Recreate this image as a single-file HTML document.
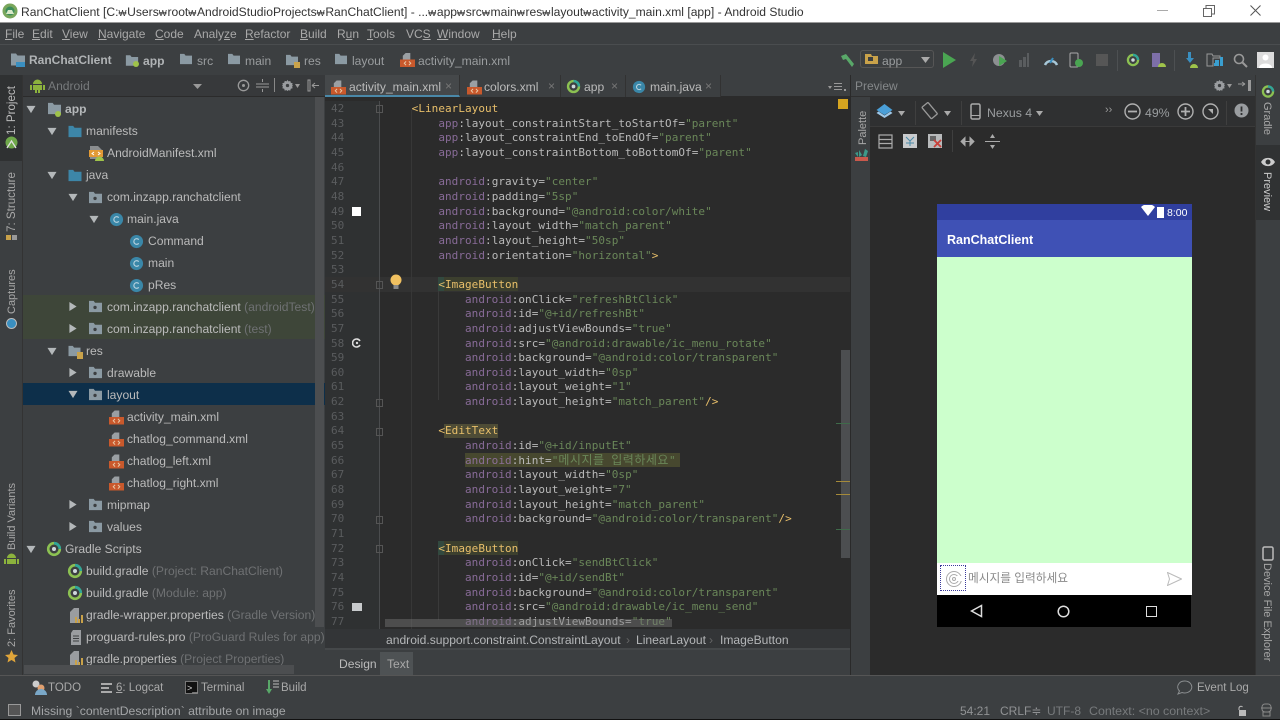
<!DOCTYPE html>
<html><head><meta charset="utf-8"><style>
html,body{margin:0;padding:0;width:1280px;height:720px;overflow:hidden;background:#3c3f41}
body{position:relative;font-family:"Liberation Sans","Noto Sans CJK KR",sans-serif;font-size:12.1px;color:#bbb}
.a{position:absolute}
.t{position:absolute;white-space:nowrap;line-height:16px}
.g{color:#6f7173}
.i{position:absolute}
.v{position:absolute;white-space:nowrap;transform-origin:0 0;line-height:14px;font-size:11px;color:#a8a8a8}
.m{position:absolute;white-space:nowrap;top:26px;line-height:16px;font-size:12px;color:#a9a9a9}
.m u{text-decoration:underline}
.w{display:inline-block;width:8.700px;font-size:8.500px;text-align:left}
pre{margin:0;font-family:"DejaVu Sans Mono","Liberation Mono",monospace;font-size:11px;line-height:14.66px;position:absolute;letter-spacing:.045px}
.n{color:#9876aa;opacity:.85}.b{color:#bababa}.s{color:#6a8759}.y{color:#e8bf6a}.e{color:#bababa}
.k{font-family:'Noto Sans CJK KR',sans-serif;font-size:12px;line-height:0;letter-spacing:.5px}
.tab{position:absolute;top:75px;height:22px;background:#3c3f41;border-right:1px solid #323232}
.sep{position:absolute;width:1px;background:#555}
</style></head><body>
<svg width="0" height="0" style="position:absolute"><defs>
<symbol id="fold" viewBox="0 0 16 14"><path d="M1 1h5l1.500 2H15v10H1z" fill="currentColor"/></symbol>
<symbol id="pkg" viewBox="0 0 16 14"><path d="M1 1h5l1.500 2H15v10H1z" fill="#8b9aa3"/><circle cx="7.500" cy="8" r="1.800" fill="#3c3f41"/></symbol>
<symbol id="gr" viewBox="0 0 16 16"><circle cx="8" cy="8" r="5.800" fill="none" stroke="#8cc152" stroke-width="2.600"/><path d="M8 2.200A5.800 5.800 0 0 1 13.800 8" fill="none" stroke="#2fa59a" stroke-width="2.600"/><circle cx="8" cy="8" r="2" fill="#cfd8dc"/></symbol>
<symbol id="c" viewBox="0 0 16 16"><circle cx="8" cy="8" r="7" fill="#3a87a8"/><path d="M10.400 6a3 3 0 1 0 0 4" fill="none" stroke="#b9d3df" stroke-width="1.200"/></symbol>
<symbol id="xml" viewBox="0 0 16 16"><path d="M6 1h5v7H3V4z" fill="#9a9fa3"/><rect y="8" width="16" height="8" fill="#c9592c"/><path d="M6.500 10l-2 2 2 2M9.500 10l2 2-2 2" fill="none" stroke="#e9c9a8" stroke-width="1"/></symbol>
<symbol id="dn" viewBox="0 0 10 10"><path d="M0 1h10L5 9z" fill="#b4b8ba"/></symbol>
<symbol id="rt" viewBox="0 0 10 10"><path d="M1 0v10l8-5z" fill="#b4b8ba"/></symbol>
<symbol id="gear" viewBox="0 0 14 14"><path d="M7 1l1 1.600 2-.5.500 2 2 .5-.5 2L13 7l-1 1 .5 2-2 .5-.5 2-2-.5L7 13l-1-1-2 .5-.5-2-2-.5.500-2L1 7l1-.500-.5-2 2-.5.500-2 2 .5z" fill="#9a9da0"/><circle cx="7" cy="7" r="1.800" fill="#3c3f41"/></symbol>
</defs></svg>

<!-- title bar -->
<div class="a" style="left:0;top:0;width:1280px;height:23px;background:#fff;border-bottom:1px solid #9a9a9a;box-sizing:border-box"></div>
<svg class="i" style="left:2px;top:3px" width="16" height="16" viewBox="0 0 16 16"><circle cx="8" cy="8" r="7.500" fill="#7aa75c"/><circle cx="8" cy="8" r="4.500" fill="#3b8c5a"/><path d="M4 11h8l-2-4H6z" fill="#d9e8c8"/></svg>
<div class="t" style="left:21px;top:4px;color:#333;font-size:12.1px">RanChatClient [C:<span class="w">₩</span>Users<span class="w">₩</span>root<span class="w">₩</span>AndroidStudioProjects<span class="w">₩</span>RanChatClient] - ...<span class="w">₩</span>app<span class="w">₩</span>src<span class="w">₩</span>main<span class="w">₩</span>res<span class="w">₩</span>layout<span class="w">₩</span>activity_main.xml [app] - Android Studio</div>
<div class="a" style="left:1157px;top:10px;width:11px;height:1px;background:#aaa"></div>
<svg class="i" style="left:1203px;top:5px" width="12" height="12"><path d="M.5 3.500h8v8h-8zM3 3V.5h8.500V9H9" fill="none" stroke="#666"/></svg>
<svg class="i" style="left:1250px;top:5px" width="12" height="12"><path d="M.5.5l10 10M10.500.5l-10 10" fill="none" stroke="#555"/></svg>

<!-- menu -->
<div class="a" style="left:0;top:23px;width:1280px;height:22px;background:#3c3f41;border-bottom:1px solid #4a4d4f;box-sizing:border-box"></div>
<span class="m" style="left:5px"><u>F</u>ile</span><span class="m" style="left:32px"><u>E</u>dit</span><span class="m" style="left:62px"><u>V</u>iew</span><span class="m" style="left:98px"><u>N</u>avigate</span><span class="m" style="left:155px"><u>C</u>ode</span><span class="m" style="left:194px">Analy<u>z</u>e</span><span class="m" style="left:245px"><u>R</u>efactor</span><span class="m" style="left:300px"><u>B</u>uild</span><span class="m" style="left:337px">R<u>u</u>n</span><span class="m" style="left:367px"><u>T</u>ools</span><span class="m" style="left:406px">VC<u>S</u></span><span class="m" style="left:437px"><u>W</u>indow</span><span class="m" style="left:492px"><u>H</u>elp</span>

<!-- nav bar -->
<svg class="i" style="left:10px;top:52px;color:#8b9aa3" width="16" height="15"><use href="#fold"/></svg><div class="a" style="left:16px;top:62px;width:9px;height:5px;background:#3a8fc0"></div>
<span class="t" style="left:29px;top:52px;font-weight:bold;color:#b0b3b5;font-size:12px">RanChatClient</span>
<svg class="i" style="left:125px;top:54px;color:#8b9aa3" width="14" height="13"><use href="#fold"/></svg><div class="a" style="left:133px;top:61px;width:6px;height:6px;border-radius:3px;background:#9fc34a"></div>
<span class="t" style="left:143px;top:53px;font-weight:bold;color:#b0b3b5">app</span>
<svg class="i" style="left:179px;top:53px;color:#8b9aa3" width="14" height="12"><use href="#fold"/></svg><span class="t" style="left:197px;top:53px;color:#9a9d9f">src</span>
<svg class="i" style="left:227px;top:53px;color:#8b9aa3" width="14" height="12"><use href="#fold"/></svg><span class="t" style="left:245px;top:53px;color:#9a9d9f">main</span>
<svg class="i" style="left:285px;top:54px;color:#8b9aa3" width="14" height="12"><use href="#fold"/></svg><div class="a" style="left:294px;top:62px;width:6px;height:6px;background:#c9a24a"></div><span class="t" style="left:304px;top:53px;color:#9a9d9f">res</span>
<svg class="i" style="left:334px;top:53px;color:#8b9aa3" width="14" height="12"><use href="#fold"/></svg><span class="t" style="left:352px;top:53px;color:#9a9d9f">layout</span>
<svg class="i" style="left:400px;top:52px" width="15" height="15"><use href="#xml"/></svg><span class="t" style="left:418px;top:53px;color:#9a9d9f">activity_main.xml</span>
<svg class="i" style="left:840px;top:53px" width="16" height="15"><path d="M1 3l5-2 8 10-2 3L6 6 3 7z" fill="#59a869"/></svg>
<div class="a" style="left:860px;top:50px;width:74px;height:18px;border:1px solid #565656;border-radius:3px;box-sizing:border-box"></div>
<svg class="i" style="left:864px;top:53px" width="15" height="12"><path d="M1 1h6l1 2h6v8H1z" fill="#c9a24a"/><rect x="4" y="4" width="5" height="4" fill="#3c3f41"/></svg>
<span class="t" style="left:882px;top:53px;color:#9a9d9f">app</span>
<svg class="i" style="left:921px;top:57px" width="9" height="6"><path d="M0 0h9L4.500 6z" fill="#aaa"/></svg>
<svg class="i" style="left:943px;top:52px" width="14" height="16"><path d="M0 0l13 8-13 8z" fill="#4aa552"/></svg>
<svg class="i" style="left:969px;top:53px" width="10" height="14"><path d="M6 0L1 8h3l-1 6 5-8H5z" fill="#555"/></svg>
<svg class="i" style="left:992px;top:52px" width="16" height="16"><circle cx="7" cy="8" r="6" fill="#8c8f91"/><path d="M7 4l8 5-8 5z" fill="#4aa552"/></svg>
<svg class="i" style="left:1018px;top:52px" width="16" height="16"><path d="M1 8h3v7H1zM5 5h3v10H5zM9 1h2v14H9z" fill="#5a5d5f"/></svg>
<svg class="i" style="left:1043px;top:53px" width="16" height="13"><path d="M2 12a6.500 6.500 0 0 1 12 0" fill="none" stroke="#a8c8d8" stroke-width="2.500"/><path d="M7 10l3-5" stroke="#3a8fc0" stroke-width="2"/></svg>
<svg class="i" style="left:1069px;top:52px" width="15" height="16"><rect x="1" y="1" width="8" height="14" rx="1" fill="none" stroke="#aaa"/><circle cx="10" cy="11" r="4" fill="#4aa552"/></svg>
<div class="a" style="left:1096px;top:54px;width:12px;height:12px;background:#565656"></div>
<div class="sep" style="left:1117px;top:50px;height:21px;background:#4d5052"></div>
<svg class="i" style="left:1126px;top:52px" width="14" height="16" viewBox="0 0 16 16"><use href="#gr"/></svg>
<svg class="i" style="left:1151px;top:52px" width="15" height="16"><rect x="1" y="1" width="8" height="14" fill="#7d6fa8"/><path d="M7 15a4 4 0 0 1 8 0z" fill="#9fc34a"/></svg>
<div class="sep" style="left:1174px;top:50px;height:21px;background:#4d5052"></div>
<svg class="i" style="left:1183px;top:52px" width="16" height="16"><path d="M5 0h3v6h3l-4 5-4-5h2z" fill="#3a8fc0"/><path d="M7 16a4 4 0 0 1 8 0z" fill="#9fc34a"/></svg>
<svg class="i" style="left:1206px;top:53px" width="18" height="14"><path d="M1 1h5l1 2h7v2H7v8H1z" fill="none" stroke="#999"/><path d="M9 7h4v3H9zM14 4h3v9h-3zM8 10h5v3H8z" fill="#3a9fd0"/></svg>
<svg class="i" style="left:1233px;top:53px" width="15" height="15"><circle cx="6" cy="6" r="4.500" fill="none" stroke="#999" stroke-width="1.600"/><path d="M9.500 9.500l4.500 4.500" stroke="#999" stroke-width="2"/></svg>
<div class="a" style="left:1257px;top:52px;width:17px;height:16px;background:#dcdcdc"></div>
<svg class="i" style="left:1257px;top:52px" width="17" height="16"><circle cx="8.500" cy="5.500" r="3" fill="#fff"/><path d="M2 16c0-6 13-6 13 0z" fill="#fff"/></svg>

<!-- left strip -->
<div class="a" style="left:0;top:75px;width:23px;height:600px;background:#3c3f41;border-right:1px solid #333;box-sizing:border-box"></div>
<div class="a" style="left:0;top:75px;width:22px;height:86px;background:#2f3132"></div>
<span class="v" style="left:5px;top:135px;transform:rotate(-90deg);color:#bbb;font-size:11.600px">1: Project</span>
<svg class="i" style="left:4px;top:135px" width="15" height="15"><circle cx="7.500" cy="7.500" r="6" fill="#6fa84a"/><path d="M3 13l4.500-7 4.500 7" fill="none" stroke="#e0e0e0" stroke-width="1.300"/></svg>
<span class="v" style="left:5px;top:232px;transform:rotate(-90deg);font-size:11.600px">7: Structure</span>
<div class="a" style="left:6px;top:235px;width:5px;height:5px;background:#c9a24a"></div><div class="a" style="left:12px;top:235px;width:5px;height:5px;background:#999"></div>
<span class="v" style="left:5px;top:314px;transform:rotate(-90deg)">Captures</span>
<svg class="i" style="left:5px;top:316px" width="13" height="14"><circle cx="6.500" cy="7.500" r="5" fill="#3a8fc0" stroke="#bbb"/></svg>
<span class="v" style="left:5px;top:550px;transform:rotate(-90deg)">Build Variants</span>
<svg class="i" style="left:4px;top:552px" width="15" height="15"><path d="M3 6a4.500 4.500 0 0 1 9 0zM3 7h9v5H3zM0 7h2v5H0zM13 7h2v5h-2z" fill="#8cb33d"/></svg>
<span class="v" style="left:5px;top:647px;transform:rotate(-90deg)">2: Favorites</span>
<svg class="i" style="left:5px;top:650px" width="13" height="13"><path d="M6.500 0l2 4.500 4.500.5-3.500 3 1 4.500-4-2.500-4 2.500 1-4.500L0 5l4.500-.5z" fill="#e0a53a"/></svg>

<!-- project panel -->
<div class="a" style="left:23px;top:75px;width:302px;height:600px;background:#3c3f41;overflow:hidden"></div>
<div class="a" style="left:23px;top:75px;width:302px;height:22px;background:#37393b;border-bottom:1px solid #2b2b2b;box-sizing:border-box"></div>
<svg class="i" style="left:30px;top:78px" width="15" height="15"><path d="M3 6a4.500 4.500 0 0 1 9 0zM3 7h9v5H3zM0 7h2v5H0zM13 7h2v5h-2zM5 12h2v3H5zM8 12h2v3H8z" fill="#8cb33d"/></svg>
<span class="t" style="left:48px;top:78px;color:#777a7c">Android</span>
<svg class="i" style="left:193px;top:84px" width="9" height="5"><path d="M0 0h9L4.500 5z" fill="#999"/></svg>
<svg class="i" style="left:237px;top:79px" width="13" height="13"><circle cx="6.500" cy="6.500" r="5.200" fill="none" stroke="#999" stroke-width="1.300"/><circle cx="6.500" cy="6.500" r="1.500" fill="#999"/></svg>
<svg class="i" style="left:256px;top:79px" width="13" height="13"><path d="M0 5h13M0 8h13M6.500 0v3M6.500 10v3" stroke="#999"/></svg>
<div class="a" style="left:274px;top:78px;width:1px;height:14px;background:#888"></div>
<svg class="i" style="left:281px;top:79px" width="13" height="13" viewBox="0 0 14 14"><use href="#gear"/></svg>
<svg class="i" style="left:295px;top:84px" width="5" height="4"><path d="M0 0h5L2.500 4z" fill="#999"/></svg>
<svg class="i" style="left:307px;top:79px" width="13" height="13"><path d="M1 1h2v11H1zM5 6.500h7M5 6.500l3-2.500M5 6.500l3 2.500" fill="none" stroke="#999"/></svg>
<div class="a" style="left:23px;top:295px;width:302px;height:44px;background:#3e4639"></div>
<div class="a" style="left:23px;top:383px;width:302px;height:22px;background:#0d2f4a"></div>
<div class="a" style="left:315px;top:97px;width:9px;height:530px;background:#4c4e50"></div>

<div class="a" style="left:0;top:1px;width:325px;height:674px;overflow:visible">
<svg class="i" style="left:26px;top:104px" width="10" height="9"><use href="#dn"/></svg>
<svg class="i" style="left:47px;top:101px;color:#8b9aa3" width="15" height="13"><use href="#fold"/></svg><div class="a" style="left:55px;top:110px;width:6px;height:6px;border-radius:3px;background:#9fc34a"></div>
<span class="t" style="left:65px;top:100px;font-weight:bold;color:#b4b7b9">app</span>
<svg class="i" style="left:47px;top:126px" width="10" height="9"><use href="#dn"/></svg>
<svg class="i" style="left:67px;top:124px;color:#3d86a8" width="16" height="13"><use href="#fold"/></svg>
<span class="t" style="left:86px;top:122px">manifests</span>
<svg class="i" style="left:89px;top:144px" width="15" height="16"><path d="M1 1h8l4 4v9H1z" fill="#8a8d8f"/><rect y="5" width="14" height="7" fill="#e29a35"/><path d="M5 7l-2 1.500 2 1.500M9 7l2 1.500-2 1.500" fill="none" stroke="#fff"/><path d="M6 16a4 4 0 0 1 9 0z" fill="#9fc34a"/></svg>
<span class="t" style="left:107px;top:144px">AndroidManifest.xml</span>
<svg class="i" style="left:47px;top:170px" width="10" height="9"><use href="#dn"/></svg>
<svg class="i" style="left:67px;top:168px;color:#3d86a8" width="16" height="13"><use href="#fold"/></svg>
<span class="t" style="left:86px;top:166px">java</span>
<svg class="i" style="left:68px;top:192px" width="10" height="9"><use href="#dn"/></svg>
<svg class="i" style="left:88px;top:190px" width="15" height="13"><use href="#pkg"/></svg>
<span class="t" style="left:107px;top:188px">com.inzapp.ranchatclient</span>
<svg class="i" style="left:89px;top:214px" width="10" height="9"><use href="#dn"/></svg>
<svg class="i" style="left:109px;top:211px" width="15" height="15"><use href="#c"/></svg>
<span class="t" style="left:127px;top:210px">main.java</span>
<svg class="i" style="left:129px;top:233px" width="15" height="15"><use href="#c"/></svg><span class="t" style="left:148px;top:232px">Command</span>
<svg class="i" style="left:129px;top:255px" width="15" height="15"><use href="#c"/></svg><span class="t" style="left:148px;top:254px">main</span>
<svg class="i" style="left:129px;top:277px" width="15" height="15"><use href="#c"/></svg><span class="t" style="left:148px;top:276px">pRes</span>
<svg class="i" style="left:68px;top:301px" width="10" height="9"><use href="#rt"/></svg>
<svg class="i" style="left:88px;top:299px" width="15" height="13"><use href="#pkg"/></svg>
<span class="t" style="left:107px;top:298px">com.inzapp.ranchatclient <span class="g">(androidTest)</span></span>
<svg class="i" style="left:68px;top:323px" width="10" height="9"><use href="#rt"/></svg>
<svg class="i" style="left:88px;top:321px" width="15" height="13"><use href="#pkg"/></svg>
<span class="t" style="left:107px;top:320px">com.inzapp.ranchatclient <span class="g">(test)</span></span>
<svg class="i" style="left:47px;top:346px" width="10" height="9"><use href="#dn"/></svg>
<svg class="i" style="left:67px;top:344px;color:#8b9aa3" width="15" height="12"><use href="#fold"/></svg><div class="a" style="left:77px;top:351px;width:6px;height:7px;background:#c9a24a"></div>
<span class="t" style="left:86px;top:342px">res</span>
<svg class="i" style="left:68px;top:367px" width="10" height="9"><use href="#rt"/></svg>
<svg class="i" style="left:88px;top:365px" width="15" height="13"><use href="#pkg"/></svg>
<span class="t" style="left:107px;top:364px">drawable</span>
<svg class="i" style="left:68px;top:389px" width="10" height="9"><use href="#dn"/></svg>
<svg class="i" style="left:88px;top:387px" width="15" height="13"><use href="#pkg"/></svg>
<span class="t" style="left:107px;top:386px">layout</span>
<svg class="i" style="left:109px;top:408px" width="15" height="16"><use href="#xml"/></svg><span class="t" style="left:127px;top:408px">activity_main.xml</span>
<svg class="i" style="left:109px;top:430px" width="15" height="16"><use href="#xml"/></svg><span class="t" style="left:127px;top:430px">chatlog_command.xml</span>
<svg class="i" style="left:109px;top:452px" width="15" height="16"><use href="#xml"/></svg><span class="t" style="left:127px;top:452px">chatlog_left.xml</span>
<svg class="i" style="left:109px;top:474px" width="15" height="16"><use href="#xml"/></svg><span class="t" style="left:127px;top:474px">chatlog_right.xml</span>
<svg class="i" style="left:68px;top:499px" width="10" height="9"><use href="#rt"/></svg>
<svg class="i" style="left:88px;top:497px" width="15" height="13"><use href="#pkg"/></svg>
<span class="t" style="left:107px;top:496px">mipmap</span>
<svg class="i" style="left:68px;top:521px" width="10" height="9"><use href="#rt"/></svg>
<svg class="i" style="left:88px;top:519px" width="15" height="13"><use href="#pkg"/></svg>
<span class="t" style="left:107px;top:518px">values</span>
<svg class="i" style="left:26px;top:544px" width="10" height="9"><use href="#dn"/></svg>
<svg class="i" style="left:46px;top:540px" width="16" height="16"><use href="#gr"/></svg>
<span class="t" style="left:65px;top:540px">Gradle Scripts</span>
<svg class="i" style="left:67px;top:562px" width="16" height="16"><use href="#gr"/></svg>
<span class="t" style="left:86px;top:562px">build.gradle <span class="g">(Project: RanChatClient)</span></span>
<svg class="i" style="left:67px;top:584px" width="16" height="16"><use href="#gr"/></svg>
<span class="t" style="left:86px;top:584px">build.gradle <span class="g">(Module: app)</span></span>
<svg class="i" style="left:69px;top:607px" width="15" height="15"><path d="M1 4l4-4h5v15H1z" fill="#9a9da0"/><path d="M6 9h2v6H6zM9 11h2v4H9zM12 7h2v8h-2z" fill="#c9a24a"/></svg>
<span class="t" style="left:86px;top:606px">gradle-wrapper.properties <span class="g">(Gradle Version)</span></span>
<svg class="i" style="left:70px;top:629px" width="12" height="15"><path d="M3 0h8v15H1V3z" fill="#9a9da0"/><path d="M3 6h6M3 8.500h6M3 11h6" stroke="#3c3f41"/></svg>
<span class="t" style="left:86px;top:628px">proguard-rules.pro <span class="g">(ProGuard Rules for app)</span></span>
<svg class="i" style="left:69px;top:650px" width="15" height="15"><path d="M1 4l4-4h5v15H1z" fill="#9a9da0"/><path d="M6 9h2v6H6zM9 11h2v4H9zM12 7h2v8h-2z" fill="#c9a24a"/></svg>
<span class="t" style="left:86px;top:650px">gradle.properties <span class="g">(Project Properties)</span></span>
</div>
<div class="a" style="left:24px;top:665px;width:270px;height:9px;background:#4c4e50"></div>

<!-- editor -->
<div class="a" style="left:325px;top:75px;width:525px;height:600px;background:#2b2b2b;overflow:hidden">
 <div class="a" style="left:0;top:26px;width:55px;height:528px;background:#2f3132"></div>
 <div class="a" style="left:0;top:202px;width:525px;height:15px;background:#323232"></div>
 <div class="a" style="left:54px;top:26px;width:1px;height:528px;background:#4a4c4e"></div>
 <div class="a" style="left:86px;top:35px;width:1px;height:519px;background:#373737"></div>
 <div class="a" style="left:113px;top:215px;width:1px;height:110px;background:#3a3a3a"></div>
 <div class="a" style="left:113px;top:480px;width:1px;height:65px;background:#3a3a3a"></div>
</div>
<!-- tab bar -->
<div class="a" style="left:325px;top:75px;width:525px;height:22px;background:#3c3f41;border-bottom:1px solid #2b2b2b;box-sizing:border-box"></div>
<div class="tab" style="left:325px;width:135px;background:#45484a;border-bottom:2px solid #4a88a8;height:22px;box-sizing:border-box"></div>
<svg class="i" style="left:331px;top:79px" width="15" height="16"><use href="#xml"/></svg>
<span class="t" style="left:349px;top:79px">activity_main.xml</span><span class="t" style="left:445px;top:78px;color:#777">×</span>
<div class="tab" style="left:460px;width:100px"></div>
<svg class="i" style="left:467px;top:79px" width="15" height="16"><use href="#xml"/></svg>
<span class="t" style="left:484px;top:79px">colors.xml</span><span class="t" style="left:548px;top:78px;color:#777">×</span>
<div class="tab" style="left:561px;width:64px"></div>
<svg class="i" style="left:566px;top:79px" width="15" height="15"><use href="#gr"/></svg>
<span class="t" style="left:584px;top:79px">app</span><span class="t" style="left:611px;top:78px;color:#777">×</span>
<div class="tab" style="left:626px;width:94px"></div>
<svg class="i" style="left:632px;top:80px" width="14" height="14"><use href="#c"/></svg>
<span class="t" style="left:650px;top:79px">main.java</span><span class="t" style="left:705px;top:78px;color:#777">×</span>
<svg class="i" style="left:828px;top:83px" width="18" height="9"><path d="M0 3h4L2 6zM6 0h8v1H6zM6 3h8v1H6zM6 6h8v1H6zM16 6h2v2h-2z" fill="#999"/></svg>

<pre class="a g" style="left:331px;top:102px;color:#5a5c5e">42
43
44
45
46
47
48
49
50
51
52
53
54
55
56
57
58
59
60
61
62
63
64
65
66
67
68
69
70
71
72
73
74
75
76
77</pre>
<div class="a" style="left:465px;top:453px;width:215px;height:14px;background:#47482f"></div>
<div class="a" style="left:438px;top:277px;width:7px;height:14px;background:#32493f"></div>
<div class="a" style="left:444px;top:277px;width:74px;height:14px;background:#3c3f2e"></div>
<div class="a" style="left:444px;top:424px;width:54px;height:14px;background:#4e4c36"></div>
<div class="a" style="left:438px;top:541px;width:7px;height:14px;background:#32493f"></div>
<div class="a" style="left:444px;top:541px;width:74px;height:14px;background:#3c3f2e"></div>
<pre class="e" style="left:385px;top:102px;height:527px;overflow:hidden;width:460px">    <span class="y">&lt;LinearLayout</span>
        <span class="n">app</span><span class="b">:layout_constraintStart_toStartOf=</span><span class="s">"parent"</span>
        <span class="n">app</span><span class="b">:layout_constraintEnd_toEndOf=</span><span class="s">"parent"</span>
        <span class="n">app</span><span class="b">:layout_constraintBottom_toBottomOf=</span><span class="s">"parent"</span>

        <span class="n">android</span><span class="b">:gravity=</span><span class="s">"center"</span>
        <span class="n">android</span><span class="b">:padding=</span><span class="s">"5sp"</span>
        <span class="n">android</span><span class="b">:background=</span><span class="s">"@android:color/white"</span>
        <span class="n">android</span><span class="b">:layout_width=</span><span class="s">"match_parent"</span>
        <span class="n">android</span><span class="b">:layout_height=</span><span class="s">"50sp"</span>
        <span class="n">android</span><span class="b">:orientation=</span><span class="s">"horizontal"</span><span class="y">&gt;</span>

        <span class="y">&lt;ImageButton</span>
            <span class="n">android</span><span class="b">:onClick=</span><span class="s">"refreshBtClick"</span>
            <span class="n">android</span><span class="b">:id=</span><span class="s">"@+id/refreshBt"</span>
            <span class="n">android</span><span class="b">:adjustViewBounds=</span><span class="s">"true"</span>
            <span class="n">android</span><span class="b">:src=</span><span class="s">"@android:drawable/ic_menu_rotate"</span>
            <span class="n">android</span><span class="b">:background=</span><span class="s">"@android:color/transparent"</span>
            <span class="n">android</span><span class="b">:layout_width=</span><span class="s">"0sp"</span>
            <span class="n">android</span><span class="b">:layout_weight=</span><span class="s">"1"</span>
            <span class="n">android</span><span class="b">:layout_height=</span><span class="s">"match_parent"</span><span class="y">/&gt;</span>

        <span class="y">&lt;EditText</span>
            <span class="n">android</span><span class="b">:id=</span><span class="s">"@+id/inputEt"</span>
            <span class="n">android</span><span class="b">:hint=</span><span class="s">"<span class="k">메시지를</span> <span class="k">입력하세요</span>"</span>
            <span class="n">android</span><span class="b">:layout_width=</span><span class="s">"0sp"</span>
            <span class="n">android</span><span class="b">:layout_weight=</span><span class="s">"7"</span>
            <span class="n">android</span><span class="b">:layout_height=</span><span class="s">"match_parent"</span>
            <span class="n">android</span><span class="b">:background=</span><span class="s">"@android:color/transparent"</span><span class="y">/&gt;</span>

        <span class="y">&lt;ImageButton</span>
            <span class="n">android</span><span class="b">:onClick=</span><span class="s">"sendBtClick"</span>
            <span class="n">android</span><span class="b">:id=</span><span class="s">"@+id/sendBt"</span>
            <span class="n">android</span><span class="b">:background=</span><span class="s">"@android:color/transparent"</span>
            <span class="n">android</span><span class="b">:src=</span><span class="s">"@android:drawable/ic_menu_send"</span>
            <span class="n">android</span><span class="b">:adjustViewBounds=</span><span class="s">"true"</span></pre>
<div class="a" style="left:385px;top:619px;width:287px;height:8px;background:rgba(120,120,120,.45)"></div>
<div class="a" style="left:352px;top:207px;width:9px;height:9px;background:#fff"></div>
<svg class="i" style="left:352px;top:338px" width="10" height="10"><path d="M8 3a4 4 0 1 0 0 4" fill="none" stroke="#ddd" stroke-width="1.600"/><circle cx="5" cy="5" r="1.200" fill="#ddd"/></svg>
<div class="a" style="left:352px;top:603px;width:10px;height:8px;background:#c8cacc"></div>
<svg class="i" style="left:390px;top:274px" width="12" height="16"><circle cx="6" cy="6" r="5.500" fill="#f0c060"/><rect x="3.500" y="11" width="5" height="4" fill="#888"/></svg>
<div class="a" style="left:376px;top:105px;width:7px;height:8px;border:1px solid #555;box-sizing:border-box"></div>
<div class="a" style="left:376px;top:281px;width:7px;height:8px;border:1px solid #555;box-sizing:border-box"></div>
<div class="a" style="left:376px;top:399px;width:7px;height:8px;border:1px solid #555;box-sizing:border-box"></div>
<div class="a" style="left:376px;top:428px;width:7px;height:8px;border:1px solid #555;box-sizing:border-box"></div>
<div class="a" style="left:376px;top:516px;width:7px;height:8px;border:1px solid #555;box-sizing:border-box"></div>
<div class="a" style="left:376px;top:545px;width:7px;height:8px;border:1px solid #555;box-sizing:border-box"></div>
<div class="a" style="left:838px;top:99px;width:10px;height:10px;background:#d6a520"></div>
<div class="a" style="left:841px;top:350px;width:9px;height:208px;background:#4c4e50"></div>
<div class="a" style="left:836px;top:423px;width:14px;height:1px;background:#3f6b4a"></div>
<div class="a" style="left:836px;top:481px;width:14px;height:1px;background:#a58a3a"></div>
<div class="a" style="left:836px;top:494px;width:14px;height:1px;background:#a58a3a"></div>
<div class="a" style="left:836px;top:529px;width:14px;height:1px;background:#3f6b4a"></div>

<!-- breadcrumb -->
<div class="a" style="left:325px;top:629px;width:525px;height:21px;background:#333537;border-bottom:2px solid #45484a;box-sizing:border-box"></div>
<span class="t" style="left:386px;top:632px;color:#b4b6b8">android.support.constraint.ConstraintLayout</span>
<span class="t" style="left:626px;top:632px;color:#666">›</span>
<span class="t" style="left:636px;top:632px;color:#b4b6b8">LinearLayout</span>
<span class="t" style="left:709px;top:632px;color:#666">›</span>
<span class="t" style="left:720px;top:632px;color:#b4b6b8">ImageButton</span>
<div class="a" style="left:325px;top:650px;width:525px;height:25px;background:#3c3f41"></div>
<div class="a" style="left:380px;top:652px;width:33px;height:23px;background:#4e5254"></div>
<span class="t" style="left:339px;top:656px">Design</span><span class="t" style="left:387px;top:656px;color:#a9a9a9">Text</span>

<!-- preview -->
<div class="a" style="left:850px;top:75px;width:405px;height:600px;background:#2b2b2b;border-left:1px solid #2a2a2a;box-sizing:border-box"></div>
<div class="a" style="left:851px;top:75px;width:404px;height:22px;background:#3c3f41;border-bottom:1px solid #2f2f2f;box-sizing:border-box"></div>
<span class="t" style="left:855px;top:78px;color:#85888a;font-size:12px">Preview</span>
<svg class="i" style="left:1213px;top:79px" width="13" height="13" viewBox="0 0 14 14"><use href="#gear"/></svg>
<svg class="i" style="left:1227px;top:84px" width="5" height="4"><path d="M0 0h5L2.500 4z" fill="#999"/></svg>
<svg class="i" style="left:1238px;top:79px" width="14" height="13"><path d="M0 5h7M7 5L4 3M7 5L4 7" fill="none" stroke="#999"/><rect x="10" y="1" width="3" height="11" fill="#999"/></svg>
<div class="a" style="left:851px;top:97px;width:19px;height:578px;background:#3c3f41"></div>
<span class="v" style="left:856px;top:145px;transform:rotate(-90deg)">Palette</span>
<svg class="i" style="left:855px;top:147px" width="14" height="14"><path d="M0 6l3 4V5zM4 10V3l3 5zM8 9l2-7 3 2-2 6z" fill="#3d9a8a"/><rect y="10" width="13" height="4" fill="#c9594c"/></svg>
<div class="a" style="left:870px;top:97px;width:385px;height:30px;background:#2f3031;border-bottom:1px solid #3a3a3a;box-sizing:border-box"></div>
<svg class="i" style="left:876px;top:103px" width="17" height="17"><path d="M8.500 1l8 6-8 5-8-5z" fill="#4a9fd8"/><path d="M.5 10l8 5 8-5-2-1.500-6 4-6-4z" fill="#9fc8e8"/></svg>
<svg class="i" style="left:898px;top:111px" width="7" height="5"><path d="M0 0h7L3.500 5z" fill="#aaa"/></svg>
<div class="a" style="left:915px;top:101px;width:1px;height:24px;background:#3f3f3f"></div>
<svg class="i" style="left:921px;top:102px" width="18" height="18"><rect x="5" y="1" width="8" height="15" rx="1" transform="rotate(-40 9 9)" fill="none" stroke="#999" stroke-width="1.300"/></svg>
<svg class="i" style="left:944px;top:111px" width="7" height="5"><path d="M0 0h7L3.500 5z" fill="#aaa"/></svg>
<div class="a" style="left:961px;top:101px;width:1px;height:24px;background:#3f3f3f"></div>
<svg class="i" style="left:970px;top:103px" width="11" height="17"><rect x="1" y="1" width="9" height="15" rx="1.500" fill="none" stroke="#aaa" stroke-width="1.500"/><path d="M1 12.500h9" stroke="#aaa"/></svg>
<span class="t" style="left:987px;top:105px;color:#9a9d9f;font-size:12.300px">Nexus 4</span>
<svg class="i" style="left:1036px;top:111px" width="7" height="5"><path d="M0 0h7L3.500 5z" fill="#aaa"/></svg>
<span class="t" style="left:1105px;top:102px;color:#999;font-size:11px">››</span>
<svg class="i" style="left:1124px;top:103px" width="17" height="17"><circle cx="8.500" cy="8.500" r="7.500" fill="none" stroke="#b0b0b0" stroke-width="1.400"/><path d="M4 8.500h9" stroke="#b0b0b0" stroke-width="1.800"/></svg>
<span class="t" style="left:1145px;top:105px;color:#9a9d9f;font-size:12.300px">49%</span>
<svg class="i" style="left:1177px;top:103px" width="17" height="17"><circle cx="8.500" cy="8.500" r="7.500" fill="none" stroke="#b0b0b0" stroke-width="1.400"/><path d="M4 8.500h9M8.500 4v9" stroke="#b0b0b0" stroke-width="1.800"/></svg>
<svg class="i" style="left:1202px;top:103px" width="17" height="17"><circle cx="8.500" cy="8.500" r="7.500" fill="none" stroke="#b0b0b0" stroke-width="1.400"/><path d="M6 6h5v5z" fill="#b0b0b0"/></svg>
<div class="a" style="left:1226px;top:101px;width:1px;height:24px;background:#3f3f3f"></div>
<svg class="i" style="left:1234px;top:103px" width="15" height="15"><circle cx="7.500" cy="7.500" r="7" fill="#9a9da0"/><path d="M7.500 3.500v5M7.500 10v2" stroke="#2f3031" stroke-width="1.800"/></svg>
<svg class="i" style="left:878px;top:134px" width="15" height="15"><path d="M1 1h13v13H1zM1 5.500h13M1 9.500h13" fill="none" stroke="#aaa" stroke-width="1.200"/></svg>
<div class="a" style="left:903px;top:134px;width:14px;height:14px;background:#c8cacc"></div>
<svg class="i" style="left:903px;top:134px" width="14" height="14"><path d="M3 3l4 4 4-4M7 7v5M3 9h8" fill="none" stroke="#4a8aa8"/></svg>
<div class="a" style="left:928px;top:134px;width:14px;height:14px;background:#b8babb"></div>
<svg class="i" style="left:928px;top:134px" width="14" height="14"><path d="M2 2h6v5H2z" fill="#666"/><path d="M6 6l7 7M13 6l-7 7" stroke="#c9403a" stroke-width="1.800"/></svg>
<div class="a" style="left:952px;top:130px;width:1px;height:22px;background:#3f3f3f"></div>
<svg class="i" style="left:960px;top:136px" width="15" height="11"><path d="M1 5.500h13M1 5.500l4-4v8zM14 5.500l-4-4v8z" fill="#aaa" stroke="#aaa"/></svg>
<svg class="i" style="left:985px;top:134px" width="15" height="15"><path d="M0 7.500h15" stroke="#aaa"/><path d="M7.500 0l2.500 4H5zM7.500 15l2.500-4H5z" fill="#aaa"/></svg>

<!-- phone -->
<div class="a" style="left:937px;top:204px;width:255px;height:16px;background:#303f9f"></div>
<svg class="i" style="left:1141px;top:205px" width="14" height="11"><path d="M0 2a10 10 0 0 1 14 0L7 11z" fill="#fff"/></svg>
<div class="a" style="left:1157px;top:207px;width:7px;height:11px;background:#fff"></div>
<span class="t" style="left:1167px;top:206px;color:#fff;font-size:10.500px;line-height:14px">8:00</span>
<div class="a" style="left:937px;top:220px;width:255px;height:37px;background:#3f51b5"></div>
<span class="t" style="left:947px;top:232px;color:#fff;font-size:12.500px;font-weight:bold">RanChatClient</span>
<div class="a" style="left:937px;top:257px;width:255px;height:306px;background:#ccffcc"></div>
<div class="a" style="left:937px;top:563px;width:255px;height:32px;background:#fff"></div>
<div class="a" style="left:940px;top:565px;width:26px;height:26px;border:1px dotted #3a3a9a;box-sizing:border-box"></div>
<svg class="i" style="left:945px;top:570px" width="18" height="18"><circle cx="9" cy="9" r="7.500" fill="none" stroke="#aaa"/><circle cx="9" cy="9" r="4.500" fill="none" stroke="#aaa"/><circle cx="9" cy="9" r="1.500" fill="none" stroke="#aaa"/><rect x="12" y="6" width="6" height="5" fill="#fff"/></svg>
<span class="t" style="left:968px;top:571px;color:#8a8a8a;font-size:11.700px">메시지를 입력하세요</span>
<svg class="i" style="left:1167px;top:572px" width="15" height="14"><path d="M.5.5l14 6.500-14 6.500 2-6.500z" fill="none" stroke="#bbb"/></svg>
<div class="a" style="left:937px;top:595px;width:254px;height:32px;background:#000"></div>
<svg class="i" style="left:970px;top:604px" width="13" height="14"><path d="M11.500 1.500v11l-10-5.500z" fill="none" stroke="#ddd" stroke-width="1.500"/></svg>
<svg class="i" style="left:1057px;top:605px" width="13" height="13"><circle cx="6.500" cy="6.500" r="5.300" fill="none" stroke="#ddd" stroke-width="1.500"/></svg>
<div class="a" style="left:1146px;top:606px;width:11px;height:11px;border:1.500px solid #ddd;box-sizing:border-box"></div>

<!-- right strip -->
<div class="a" style="left:1255px;top:75px;width:25px;height:600px;background:#3c3f41;border-left:1px solid #333;box-sizing:border-box"></div>
<div class="a" style="left:1256px;top:145px;width:24px;height:75px;background:#303233"></div>
<svg class="i" style="left:1261px;top:84px" width="14" height="15" viewBox="0 0 16 16"><use href="#gr"/></svg>
<span class="v" style="left:1274px;top:102px;transform:rotate(90deg)">Gradle</span>
<svg class="i" style="left:1261px;top:157px" width="14" height="10"><path d="M0 5a8 8 0 0 1 14 0 8 8 0 0 1-14 0z" fill="#ccc"/><circle cx="7" cy="5" r="2.500" fill="#303233"/></svg>
<span class="v" style="left:1274px;top:172px;transform:rotate(90deg);color:#ccc">Preview</span>
<svg class="i" style="left:1262px;top:546px" width="12" height="15"><rect x="1" y="1" width="10" height="13" rx="1.500" fill="none" stroke="#bbb" stroke-width="1.500"/></svg>
<span class="v" style="left:1274px;top:563px;transform:rotate(90deg)">Device File Explorer</span>

<!-- bottom tool bar -->
<div class="a" style="left:0;top:675px;width:1280px;height:45px;background:#3c3f41;border-top:1px solid #555;box-sizing:border-box"></div>
<svg class="i" style="left:32px;top:680px" width="15" height="15"><circle cx="4" cy="4" r="3.500" fill="#ccc"/><circle cx="9" cy="8" r="3.500" fill="#e0a070"/><path d="M3 15a6 6 0 0 1 12 0z" fill="#7aa8c8"/></svg>
<span class="t" style="left:48px;top:680px;font-size:11.500px;color:#a9a9a9">TODO</span>
<svg class="i" style="left:101px;top:683px" width="12" height="10"><path d="M0 0h11v2H0zM0 4h8v2H0zM0 8h11v2H0z" fill="#aaa"/></svg>
<span class="t" style="left:116px;top:680px;font-size:11.500px;color:#a9a9a9"><u>6</u>: Logcat</span>
<div class="a" style="left:185px;top:681px;width:13px;height:13px;background:#111;border:1px solid #777;box-sizing:border-box"></div>
<span class="t" style="left:187px;top:680px;font-size:9px;color:#ddd">&gt;_</span>
<span class="t" style="left:201px;top:680px;font-size:11.500px;color:#a9a9a9">Terminal</span>
<svg class="i" style="left:266px;top:680px" width="14" height="15"><path d="M2 0h2v9h2l-3 5-3-5h2z" fill="#59a869"/><path d="M7 1h6M7 4h6M7 7h6" stroke="#bbb"/></svg>
<span class="t" style="left:281px;top:680px;font-size:11.500px;color:#a9a9a9">Build</span>
<svg class="i" style="left:1177px;top:680px" width="17" height="15"><path d="M8 1a7 6 0 1 1-3 11.500L1 14l1.500-3A7 6 0 0 1 8 1z" fill="none" stroke="#8a8d8f"/></svg>
<span class="t" style="left:1197px;top:680px;font-size:11.500px;color:#a9a9a9">Event Log</span>
<div class="a" style="left:8px;top:704px;width:13px;height:12px;background:#555;border:1px solid #999;box-sizing:border-box"></div>
<span class="t" style="left:31px;top:703px;color:#a3a5a7;font-size:12.200px">Missing `contentDescription` attribute on image</span>
<span class="t" style="left:960px;top:703px;color:#909294;font-size:12px">54:21</span>
<span class="t" style="left:1000px;top:703px;color:#909294;font-size:12px">CRLF≑</span>
<span class="t" style="left:1047px;top:703px;color:#777a7c;font-size:12px">UTF-8</span>
<span class="t" style="left:1089px;top:703px;color:#777a7c;font-size:12.400px">Context: &lt;no context&gt;</span>
<svg class="i" style="left:1237px;top:705px" width="10" height="11"><path d="M2 5V3a2 2 0 0 1 3.500-1" fill="none" stroke="#bbb"/><rect x="2" y="5" width="7" height="6" fill="#bbb"/></svg>
<svg class="i" style="left:1260px;top:703px" width="13" height="14"><rect x="2" y="1" width="9" height="8" rx="3" fill="none" stroke="#888"/><path d="M1 5h11M3 13h7v-4H3z" fill="none" stroke="#888"/></svg>
<div class="a" style="left:0;top:719px;width:1280px;height:1px;background:#111"></div>
</body></html>
